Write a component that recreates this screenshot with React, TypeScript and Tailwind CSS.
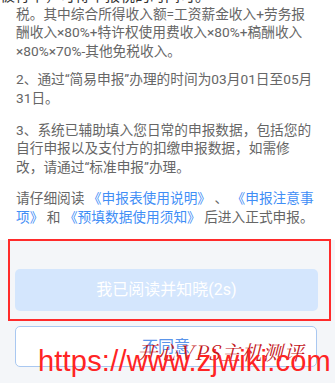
import React from "react";

function Link({ children }: { children: React.ReactNode }) {
  return <span className="text-[#3f8ef6]">{children}</span>;
}

export default function App() {
  return (
    <div className="relative w-[335px] h-[383px] overflow-hidden bg-white flex flex-col font-['Roboto','Noto_Sans_CJK_SC',sans-serif]">
      {/* cut-off line of the previous block, scrolled out */}
      <div className="absolute left-0 top-[-13px] whitespace-nowrap text-[15px] leading-[19px] text-[#333]">
        被行下，可得申报税的时间可。
      </div>

      <div className="pl-4 pt-[4.6px] text-[13.7px] leading-[18.8px] text-[#666] whitespace-nowrap">
        <p>
          税。其中综合所得收入额=工资薪金收入+劳务报
          <br />
          酬收入×80%+特许权使用费收入×80%+稿酬收入
          <br />
          ×80%×70%-其他免税收入。
        </p>
        <p className="mt-[9px]">
          2、通过“简易申报”办理的时间为03月01日至05月
          <br />
          31日。
        </p>
        <p className="mt-[13px]">
          3、系统已辅助填入您日常的申报数据，包括您的
          <br />
          自行申报以及支付方的扣缴申报数据，如需修
          <br />
          改，请通过“标准申报”办理。
        </p>
        <p className="mt-[12px]">
          请仔细阅读 <Link>《申报表使用说明》</Link> 、 <Link>《申报注意事</Link>
          <br />
          <Link>项》</Link> 和 <Link>《预填数据使用须知》</Link> 后进入正式申报。
        </p>
      </div>

      <div className="mt-[13.8px] flex-1 bg-[#f4f6f9] pt-[29px] px-[15px] flex flex-col gap-[15px]">
        <button className="h-[42px] w-[303px] rounded-[5px] bg-[#d4e6fd] text-[16px] text-white">
          我已阅读并知晓(2s)
        </button>
        <button className="h-[41px] w-[302px] rounded-[5px] border border-[#a9c8f1] bg-white text-[16px] text-[#5b95ea]">
          不同意
        </button>
      </div>

      {/* annotation box drawn over the button */}
      <div className="absolute left-[8px] top-[239px] w-[323px] h-[82px] border-2 border-[#ff2b2b]" />

      {/* watermark */}
      <div className="absolute left-[137px] top-[342px] whitespace-nowrap italic text-[20px] leading-none tracking-[1px] text-[#c3161b] font-['Noto_Serif_CJK_SC','Noto_Sans_CJK_SC',serif]">
        开心VPS主机测评
      </div>
      <div className="absolute left-[38px] top-[347px] whitespace-nowrap text-[29px] leading-[29px] text-[#ff2424] font-['Liberation_Sans',Arial,sans-serif] tracking-[0.2px]">
        https://www.zjwiki.com
      </div>
    </div>
  );
}
